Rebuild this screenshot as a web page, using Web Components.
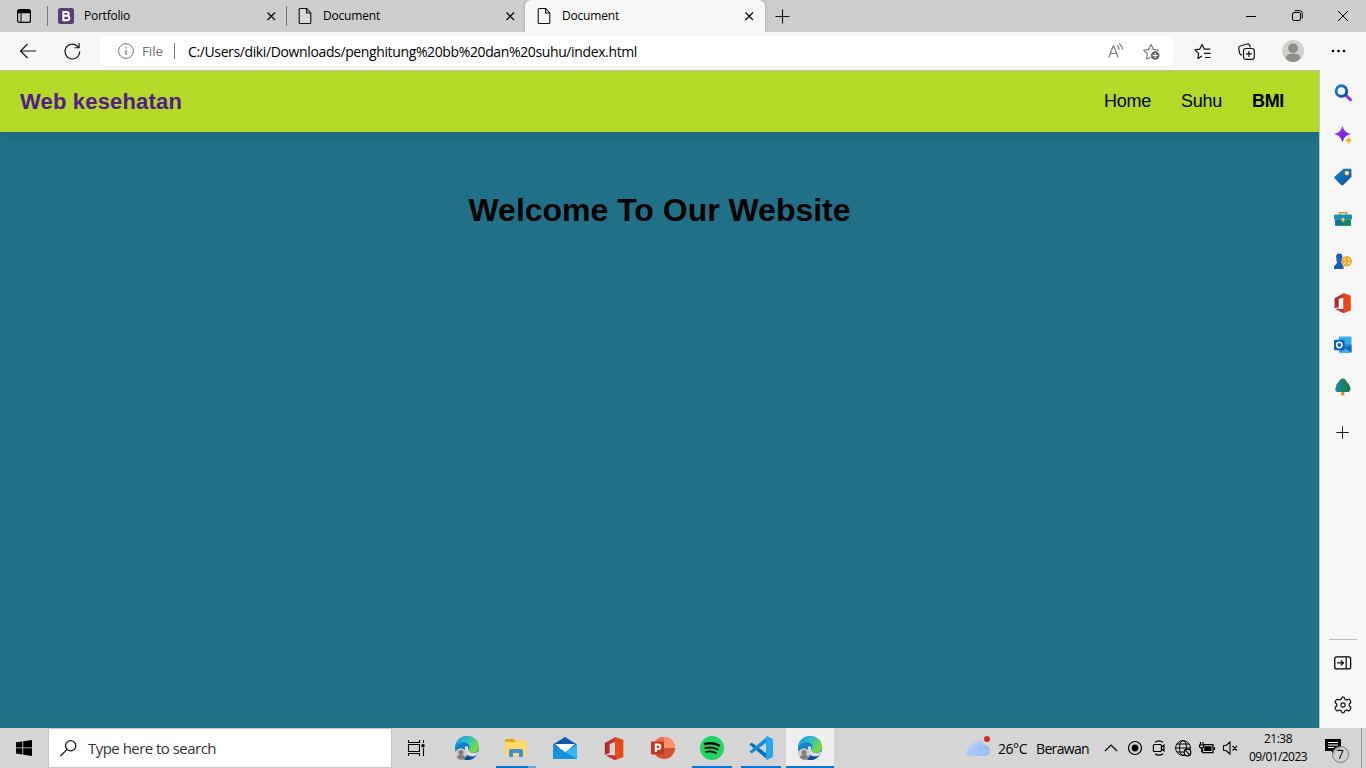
<!DOCTYPE html>
<html lang="id">
<head>
<meta charset="utf-8">
<title>Document</title>
<style>
html,body{margin:0;height:100%;overflow:hidden;background:#f7f7f7}
body{font-family:"Open Sans","Noto Sans",sans-serif;color:#000}
</style>
</head>
<body>
<desktop-screen></desktop-screen>
<script>
const ICONS = {
tabs:`<rect x="1.6" y="1.6" width="12.8" height="12.8" rx="2" fill="none" stroke="#000" stroke-width="1.2"/><path d="M1.500 5.200V3.400Q1.500 1.500 3.400 1.500h9.200q1.900 0 1.900 1.900v1.800z"/><path d="M5 5v9.500" stroke="#000" stroke-width="1"/>`,
boot:`<rect width="16" height="16" rx="2.5" fill="#563d7c"/><path fill="none" stroke="#fff" stroke-width="2" d="M5.400 3.900h3.100c3 0 3 3.900 0 3.900H5.400zM5.400 7.800h3.400c3.400 0 3.400 4.400 0 4.400H5.400z"/>`,
doc:`<path fill="#f5f5f5" fill-opacity=".3" stroke="#111" stroke-width="1.1" stroke-linejoin="round" d="M3.200.5h6.600l4 4.500v9.500q0 1-1 1H3.200q-1 0-1-1v-13q0-1 1-1zM9.600.6V5h4.200"/>`,
close:`<path fill="none" stroke="#111" stroke-width="1.4" d="M4.500 4.500l7.500 7.500M12 4.500l-7.500 7.500"/>`,
plus:`<path fill="none" stroke="#111" stroke-width="1.1" d="M8.500 1.500v14M1.500 8.500h14"/>`,
min:`<path stroke="#000" d="M3 8.500h10"/>`,
restore:`<path fill="none" stroke="#000" d="M3.500 6q0-1.500 1.500-1.500h5q1.500 0 1.500 1.500v5q0 1.500-1.500 1.500H5Q3.500 12.500 3.500 11zM5.500 2.700h5.200q2.600 0 2.600 2.600v5.200"/>`,
winx:`<path fill="none" stroke="#000" d="M3 3l10 10M13 3L3 13"/>`,
back:`<path fill="none" stroke="#111" stroke-width="1.1" d="M16 8H.5M7.500 1l-7 7 7 7"/>`,
reload:`<path fill="none" stroke="#111" stroke-width="1.15" d="M15.700 8.500a7.400 7.400 0 1 1-2.500-5.500l1.700 1.600M15.100 0v4.700h-4.700"/>`,
info:`<circle cx="8" cy="8" r="7.400" fill="none" stroke="#777"/><path stroke="#777" stroke-width="1.300" d="M8 7v5M8 4v1.500"/>`,
read:`<g fill="none" stroke="#777" stroke-width="1.150"><path d="M.700 14.500L5.200 3h.500l4.600 11.500M2.400 10.500h6.200M9 2.700q2 1.300 2.200 4.100M11 .700q3.200 2 3.500 5.800"/></g>`,
staradd:`<path fill="none" stroke="#777" stroke-width="1.150" stroke-linejoin="round" d="M8 14.200L3.700 16l.600-5.100L.700 7.200l4.900-.800L8 1.500l2.400 4.900 5 .800-1 1"/><circle cx="12.200" cy="12.500" r="4.300" fill="#666"/><path stroke="#fff" stroke-width="1.100" d="M12.200 10v5M9.700 12.500h5"/>`,
fav:`<path fill="none" stroke="#111" stroke-width="1.200" stroke-linejoin="round" d="M8 12.900L4 15.400l.600-5L1 6.900l4.800-.800L8 1.500l2.300 4.600h6M10 10.300h6.500M11 14.500h5.500"/>`,
coll:`<g fill="none" stroke="#111" stroke-width="1.200"><path d="M3.900 12.200Q2 11.800 1.600 10L.700 5.200Q.600 3.500 2.200 3l7-2q1.900-.300 2.500 1.500l.600 2"/><rect x="5.500" y="5.500" width="10.800" height="10.800" rx="2.200"/><path d="M10.900 7.900v6M7.900 10.900h6"/></g>`,
person:`<circle cx="11" cy="11" r="11" fill="#d2d0cd"/><circle cx="11" cy="8.300" r="4.900" fill="#918d8a"/><path fill="#918d8a" d="M3.500 18q.400-4.200 7.500-4.200t7.500 4.200q-3 4-7.500 4t-7.500-4z"/>`,
dots:`<circle cx="3" cy="8" r="1.300"/><circle cx="8.500" cy="8" r="1.300"/><circle cx="14" cy="8" r="1.300"/>`,
search:`<defs><linearGradient id="a" x2="1" y2="1"><stop stop-color="#1b86e0"/><stop offset="1" stop-color="#103f9f"/></linearGradient></defs><path d="M11.500 11l4 3.700" stroke="#8a3be2" stroke-width="3" stroke-linecap="round"/><circle cx="7" cy="6.700" r="5" fill="#f4faff" stroke="url(#a)" stroke-width="2.700"/>`,
spark:`<defs><linearGradient id="a" x2="1" y2="1"><stop stop-color="#b14df5"/><stop offset=".5" stop-color="#8525e6"/><stop offset="1" stop-color="#5b3ce8"/></linearGradient></defs><path fill="url(#a)" d="M8 0c1.900 5 2.700 5.700 7.800 7.500C10.700 9.300 9.900 10 8 15.500 6.100 10 5.300 9.300.200 7.500 5.300 5.700 6.100 5 8 0z"/><path fill="#f5b51d" d="M13.800 9.800c.700 2.400 1.200 2.900 3.400 3.800-2.200.900-2.700 1.300-3.400 3.600-.700-2.300-1.200-2.700-3.400-3.600 2.200-.900 2.700-1.400 3.400-3.800z"/>`,
tag:`<defs><linearGradient id="a" y2="1"><stop stop-color="#1388ce"/><stop offset="1" stop-color="#124aa4"/></linearGradient></defs><path fill="url(#a)" d="M9 .700h6q1.500 0 1.500 1.500v6.300L8.700 16q-1.200.800-2.200-.200L.700 10q-.900-1 0-2z"/><circle cx="12.200" cy="4.800" r="1.700" fill="#fff" stroke="#f4cd39" stroke-width="1.200"/>`,
box:`<defs><linearGradient id="a" x2="1"><stop stop-color="#146ead"/><stop offset="1" stop-color="#168a50"/></linearGradient></defs><path fill="none" stroke="#d99b22" stroke-width="1.500" d="M5.200 5V2.600h6.600V5"/><rect x="0" y="4.200" width="17" height="5" rx="1" fill="#1c91b6"/><path fill="url(#a)" d="M1 9h15v6H1z"/><path fill="#f3ca42" d="M7.200 7.500h2.600V11H7.200z"/>`,
games:`<g fill="#175cbd"><circle cx="5" cy="4.500" r="3"/><path d="M2 7h6v1.500H6.800q.200 3 2.200 5V16H0v-2.500q3-2 3.100-5H2z"/></g><circle cx="12" cy="8.700" r="5" fill="#efad2e"/><g fill="#fff3bd"><circle cx="10" cy="7" r=".9"/><circle cx="14" cy="7" r=".9"/><circle cx="10" cy="10.500" r=".9"/><circle cx="14" cy="10.500" r=".9"/></g>`,
office:`<defs><linearGradient id="a" x2="1"><stop stop-color="#a72232"/><stop offset="1" stop-color="#ef5922"/></linearGradient></defs><path fill="url(#a)" fill-rule="evenodd" d="M1.500 5l8.500-4.700 6.700 2.200v14L10 19l-7-3.400 1-.8 6 .7V4.200L5.500 5.800v7.400l-4 1.600z"/><path fill="#e74816" d="M10 .3l6.700 2.200v14L10.200 19z"/><path fill="#d02a45" d="M3 14.900l7.200.6V19l-2-.6z"/>`,
outlook:`<path fill="#36b0ec" d="M4.500.500h11q1 0 1 1v13q0 1.500-1.500 1.500H5z"/><path fill="#1685d8" d="M5 8h11.500v1L5 15z"/><path fill="#1368b8" d="M10 11l6.500 4.500V9z"/><rect y="3.500" width="10" height="10" rx="1" fill="#0a62bd"/><circle cx="5" cy="8.500" r="2.500" fill="none" stroke="#fff" stroke-width="1.400"/>`,
tree:`<defs><linearGradient id="a" x2="1"><stop stop-color="#218aa1"/><stop offset="1" stop-color="#14764a"/></linearGradient></defs><path fill="#e58a16" d="M6.800 12h3v4.500h-3z"/><path fill="url(#a)" d="M8.300.5q2.400 0 4.300 4 2.200 1 1.900 2.700 2.600 4-.700 6H3Q-.4 12 2.200 7.500 1.400 6 4 4.300 5.700.5 8.300.5z"/>`,
panel:`<rect x=".700" y="2.700" width="15" height="11.300" rx="1.800" fill="none" stroke="#000" stroke-width="1.200"/><path fill="none" stroke="#000" stroke-width="1.100" d="M11.500 3v11M3 8.400h6M6.500 6l2.400 2.400-2.400 2.400"/>`,
gear:`<path fill="none" stroke="#111" stroke-width="1.150" stroke-linejoin="round" d="M6.900 2.900Q7.100.9 8.500.9t1.600 2l1.500.900q1.900-.900 2.800-.600 1.600 1.600 1.500 3l-1.500 1.400v1.800l1.500 1.300q.300 1.400-1.300 3.200-1.200.300-3-.700l-1.500.900q-.300 1.900-1.600 1.900t-1.600-1.900l-1.500-.900q-1.800 1-3 .700Q.800 12.100 1.100 10.700l1.500-1.300V7.600L1.100 6.200q-.100-1.400 1.500-3 .900-.300 2.800.600z"/><circle cx="8.500" cy="8.500" r="2" fill="none" stroke="#111" stroke-width="1.100"/>`,
win:`<path d="M0 2.300l6.400-.9v6.100H0zM7.200 1.300L16 0v7.500H7.200zM0 8.300h6.400v6.200L0 13.600zM7.200 8.300H16V16l-8.800-1.300z"/>`,
wsearch:`<circle cx="10.700" cy="5.800" r="5.100" fill="none" stroke="#111" stroke-width="1.200"/><path d="M7 9.400L.5 16" stroke="#111" stroke-width="1.300"/>`,
task:`<path fill="none" stroke="#000" stroke-width="1.100" d="M.5 0v2.500h11V0M.5 16v-2.500h11V16M.5 4.500h11v7H.5zM15.500 0v3M15.500 8v8"/><path d="M13.500 4.200h3v3h-3z"/>`,
edge:`<defs><linearGradient id="a" x2="1" y2=".5"><stop stop-color="#1695d4"/><stop offset=".45" stop-color="#28bcd3"/><stop offset="1" stop-color="#79db3d"/></linearGradient><linearGradient id="b" x2=".7" y2="1"><stop stop-color="#189fe6"/><stop offset="1" stop-color="#0857ab"/></linearGradient></defs><circle cx="12" cy="12" r="12" fill="url(#b)"/><path fill="url(#a)" d="M.400 10C1.700 3.800 6.100 0 12.100 0 19 0 24 5 24 10.600c0 4.500-3 6.400-6.300 6.400-2.900 0-4.700-1.500-4.700-2.700 0-1 1.200-1.400 1.200-3.400 0-2.700-2.500-4.700-5.800-4.700C4.700 6.200 1.800 8 .4 10z"/><path fill="#0c4c91" d="M8.500 12q-1.300 8 6 9.300 4 .5 7.100-2.100Q18 24 12.300 24 6 22.500 6 17q0-3 2.500-5z"/><path fill="#dcdcdc" d="M10 13q-1-2 1.500-3 2 0 1.600 3.700 1 3.500 6.200 3.400 2.400-.300 4.500-2-1 3.200-2.700 4.500-4 2-9.100-.600Q9.500 17 10 13z"/><circle cx="6" cy="18" r="5.800" fill="#cfccca"/><circle cx="6" cy="16.600" r="2.500" fill="#827d7b"/><path fill="#827d7b" d="M1.900 21.500q.4-2.700 4.100-2.700t4.100 2.700Q8 23.800 6 23.800t-4.100-2.300z"/>`,
files:`<path fill="#e6a81a" d="M1 4q0-1 1-1h8l1.500 2V8H1z"/><path fill="#ffd966" d="M1 6h10.500L13 4.500h8.500q1 0 1 1V20H1z"/><path fill="#3d91d8" d="M5 21v-6.500Q5 13 6.500 13h11q1.500 0 1.500 1.500V21h-4v-4H9v4z"/>`,
mail:`<path fill="#0c59a4" d="M0 8.500L12 1l12 7.500-12 9z"/><path fill="#fff" d="M2 8h20l-10 9z"/><path fill="#32b4ee" d="M0 8.500L12 16l12-7.500V23H0z"/><path fill="#1691dd" d="M12 16l12 7H0V8.500z"/>`,
ppt:`<circle cx="13" cy="12" r="11" fill="#d35230"/><path fill="#ed6c47" d="M13 12V1A11 11 0 0 0 2 12z"/><path fill="#ff9068" d="M13 1a11 11 0 0 1 11 11H13z"/><rect y="5.500" width="13" height="13" rx="1" fill="#bd3a1e"/><path fill="none" stroke="#fff" stroke-width="2" d="M4.800 16V8.500h2.100c3.300 0 3.300 4.600 0 4.600H4.800"/>`,
spot:`<circle cx="12" cy="12" r="12" fill="#1ed760"/><g fill="none" stroke="#000" stroke-linecap="round"><path stroke-width="2.500" d="M5 8q7.500-2 14 1.500"/><path stroke-width="2" d="M5.500 12q6.500-1.500 12 1.400"/><path stroke-width="1.700" d="M6 15.800q5.500-1.200 10 1.200"/></g>`,
code:`<path fill="#0072bb" d="M.4 8.500L2 7q.7-.5 1.400 0L18 18v5.300z"/><path fill="#0d8ed5" d="M.4 15.700L2 17q.7.500 1.400 0L18 6V.700z"/><path fill="#2aa7ee" d="M18 0l5 2.500q1 .5 1 1.500v16q0 1-1 1.500L18 24q-1-.5-1-2V2q0-1.500 1-2z"/>`,
cloud:`<defs><linearGradient id="a" y2="1"><stop stop-color="#cee1fa"/><stop offset="1" stop-color="#78a7ee"/></linearGradient></defs><g transform="translate(0 -1)"><path fill="url(#a)" d="M5 21c-6 0-6.300-7.400-.200-8C6 3 16 3 18 9.700c7 .500 7.700 11.300 0 11.300z"/><path fill="#a9c8fa" opacity=".8" d="M1 18q1-4 5.500-4.200Q12 14 14 17q3-4 9-2-1 6-5 6H5q-3 0-4-3z"/></g><circle cx="21" cy="3" r="3" fill="#cf2824"/>`,
up:`<path fill="none" stroke="#000" stroke-width="1.200" d="M2 11l6-6 6 6"/>`,
rec:`<circle cx="8" cy="8" r="6.500" fill="none" stroke="#000" stroke-width="1.200"/><circle cx="8" cy="8" r="3.400"/>`,
cam:`<path fill="none" stroke="#000" stroke-width="1.200" d="M4 2.300q4-3 8 0M4 13.700q4 3 8 0M3.400 4.500h6q1 0 1 1v5q0 1-1 1h-6q-1 0-1-1v-5q0-1 1-1zM10.500 7l2.500-1.800v5.600L10.500 9"/>`,
globe:`<g fill="none" stroke="#000"><circle cx="8" cy="8" r="7.400"/><ellipse cx="8" cy="8" rx="3.500" ry="7.400"/><path d="M.7 8h14.500M2 4h12M2 12h8"/><circle cx="12.500" cy="12.500" r="3.300" fill="#d6d6d6" stroke-width="1.200"/><path stroke-width="1.200" d="M10.200 10.200l4.600 4.600"/></g>`,
battery:`<path fill="none" stroke="#000" stroke-width="1.200" d="M5 4.600h9v8H3.500V9M1.500 2v3M4 2v3M.5 5h4.300v1Q4.800 8 2.700 8T.5 6zM2.700 8v4M15.500 7v3"/><path d="M5.500 6.300h7v4.800H5z"/>`,
vol:`<path fill="none" stroke="#000" stroke-width="1.100" d="M1.500 5.500H4L8 2v12l-4-3.500H1.500zM10.500 6l4.500 4.500M15 6l-4.500 4.500"/>`,
note:`<path d="M0 0h16v12H10v4.500L6 12H0z"/><path stroke="#fff" stroke-width="1.200" d="M3 3.500h10M3 6h10M3 8.500h6"/>`
};
const VB={plus:17,back:17,reload:17,staradd:17,fav:17,coll:17,person:22,dots:17,search:17,spark:17,tag:17,box:17,games:17,outlook:17,tree:17,panel:17,gear:17,office:19,wsearch:17,task:17,note:17,edge:24,files:24,mail:24,ppt:24,spot:24,code:24,cloud:24};
customElements.define('ui-icon', class extends HTMLElement{
 constructor(){super();this.attachShadow({mode:'open'})}
 connectedCallback(){const n=this.getAttribute('name'),v=VB[n]||16,s=this.getAttribute('size')||v;
  this.shadowRoot.innerHTML=`<style>:host{display:flex;flex:none;align-items:center;justify-content:center}svg{display:block;overflow:visible;flex:none}</style><svg width="${s}" height="${s}" viewBox="0 0 ${v} ${v}">${ICONS[n]}</svg>`}
});
/* Single-line label whose tracking is tuned to a target width. */
customElements.define('ui-label', class extends HTMLElement{
 constructor(){super();this.attachShadow({mode:'open'}).innerHTML=`<style>:host{display:block;flex:none;white-space:pre}span{display:inline-block}</style><span><slot></slot></span>`}
 connectedCallback(){const w=+this.getAttribute('w');if(!w)return;
  const s=this.shadowRoot.querySelector('span'),n=this.textContent.length;
  s.style.letterSpacing=((w-s.getBoundingClientRect().width)/n)+'px';this.style.width=w+'px'}
});
const make=(tag,html)=>customElements.define(tag,class extends HTMLElement{
 constructor(){super();this.attachShadow({mode:'open'});const t=document.createElement('template');t.innerHTML=html;this.shadowRoot.append(t.content.cloneNode(true))}
});
make('browser-tab',`<style>:host{display:flex;box-sizing:border-box;align-items:center;width:239px;height:32px;padding:0 7px 0 10px;border-right:1px solid transparent;font-size:12px;position:relative;flex:none}
:host([active]){width:240px;margin-left:-1px;background:#f7f7f7;border-radius:6px 6px 0 0;border:0;padding:0 8px 0 11px;box-shadow:0 0 3px #0004}
.t{flex:1;margin-left:10px;padding-bottom:1px}:host([rule])::after{content:"";position:absolute;right:-1px;top:6px;width:1px;height:20px;background:#777}</style>
<slot name="icon"></slot><div class="t"><slot></slot></div><ui-icon name="close"></ui-icon>`);
make('tab-strip',`<style>:host{display:flex;height:32px;background:#cdcdcd;align-items:center;overflow:hidden}
.w{width:47px;height:20px;border-right:1px solid #777;flex:none}.p{width:34px}.sp{flex:1}.c{width:46px}</style>
<ui-icon class="w" name="tabs"></ui-icon>
<browser-tab rule><ui-icon slot="icon" name="boot"></ui-icon><ui-label w="46">Portfolio</ui-label></browser-tab>
<browser-tab><ui-icon slot="icon" name="doc"></ui-icon><ui-label w="57">Document</ui-label></browser-tab>
<browser-tab active><ui-icon slot="icon" name="doc"></ui-icon><ui-label w="57">Document</ui-label></browser-tab>
<ui-icon class="p" name="plus" size="17"></ui-icon><div class="sp"></div>
<ui-icon class="c" name="min"></ui-icon><ui-icon class="c" name="restore"></ui-icon><ui-icon class="c" name="winx"></ui-icon>`);
make('address-bar',`<style>:host{display:flex;box-sizing:border-box;width:1074px;height:30px;margin:0 6px;background:#fff;border-radius:4px;align-items:center;padding:0 14px 0 18px;font-size:14px;box-shadow:0 0 2px #0001;flex:none}
.f{margin-left:8px;color:#717171;font-size:13.500px}.r{width:1px;height:16px;background:#777;margin:0 13px 0 11px}.s{flex:1}.g{width:54px}</style>
<ui-icon name="info"></ui-icon><ui-label class="f" w="21">File</ui-label><div class="r"></div><ui-label w="449">C:/Users/diki/Downloads/penghitung%20bb%20dan%20suhu/index.html</ui-label><div class="s"></div><ui-icon class="g" name="read"></ui-icon><ui-icon name="staradd"></ui-icon>`);
make('tool-bar',`<style>:host{display:flex;height:38px;background:#f7f7f7;align-items:center;padding-left:6px}
.b{width:44px}.m{width:46px}.q{width:48px;padding-left:1px;box-sizing:border-box}</style><ui-icon class="b" name="back"></ui-icon><ui-icon class="b" name="reload"></ui-icon><address-bar></address-bar>
<ui-icon class="b" name="fav"></ui-icon><ui-icon class="b" name="coll"></ui-icon><ui-icon class="q" name="person"></ui-icon><ui-icon class="m" name="dots" style="width:44px"></ui-icon>`);
make('site-header',`<style>:host{display:flex;height:61px;background:#b2da27;align-items:center;justify-content:space-between;padding:0 35px 0 20px;box-shadow:0 2px 12px #0002;font-size:18px}
.b{font-size:22px;font-weight:bold;color:#551a8b}nav{display:flex;gap:30px}.n{font-weight:bold}</style>
<ui-label class="b" w="162">Web kesehatan</ui-label><nav><ui-label w="47">Home</ui-label><ui-label w="41">Suhu</ui-label><ui-label class="n" w="32">BMI</ui-label></nav>`);
make('web-page',`<style>:host{display:block;flex:1;background:#207188;font-family:"Liberation Sans",Arial,sans-serif;overflow:hidden}
h1{margin:59px 0 0;display:flex;justify-content:center;font-size:32px;line-height:38px;font-weight:bold}</style>
<site-header></site-header><h1><ui-label w="382">Welcome To Our Website</ui-label></h1>`);
make('side-bar',`<style>:host{display:flex;flex-direction:column;box-sizing:border-box;align-items:flex-start;padding:2px 0 2px;background:#f7f7f7;border-left:1px solid #c4c4c4;flex:none;width:47px}
ui-icon{height:42px;width:46px}.p{margin-top:4px;width:45px;height:41px;margin-bottom:1px}.s{flex:1}.r{height:1px;width:28px;background:#bbb;margin:0 0 2px 9px}</style>
${['search','spark','tag','box','games','office','outlook','tree'].map(n=>`<ui-icon name="${n}" size="${n=='office'?20:18}"></ui-icon>`).join('')}<ui-icon class="p" name="plus" size="15"></ui-icon><div class="s"></div><div class="r"></div><ui-icon name="panel" size="18"></ui-icon><ui-icon name="gear" size="18"></ui-icon>`);
make('task-app',`<style>:host{display:flex;flex-direction:column;width:48px;height:40px;align-items:center;flex:none}
.i{display:flex;align-items:center;justify-content:center;height:38px;padding-top:2px;box-sizing:border-box}:host([on]) .u{width:40px;background:#0078d7}.u{height:2px;width:0}
:host([multi]) .u{background:linear-gradient(90deg,#0078d7 32px,#66a9e2 32px)}:host([active]){background:#eee}:host([active]) .u{width:48px;background:#0078d7}</style><div class="i"><slot></slot></div><div class="u"></div>`);
make('search-box',`<style>:host{display:flex;box-sizing:border-box;width:344px;height:40px;border:1px solid #c5c5c5;background:#fff;align-items:center;padding-left:11px;font-size:15px;color:#333;flex:none}ui-label{margin-left:11px}</style><ui-icon name="wsearch"></ui-icon><ui-label w="128">Type here to search</ui-label>`);
make('tray-clock',`<style>:host{display:flex;flex-direction:column;align-items:center;width:72px;font-size:12px;line-height:18px;flex:none;padding-bottom:1px}</style><ui-label w="28">21:38</ui-label><ui-label w="58">09/01/2023</ui-label>`);
make('notice-button',`<style>:host{display:block;position:relative;width:26px;height:26px;flex:none}
.i{position:absolute;left:1px;top:4px}.n{position:absolute;left:8px;top:11px;width:15px;height:15px;border:1px solid #777;border-radius:50%;background:#d2d2d2d0;font-size:12px;line-height:15px;text-align:center}</style><ui-icon class="i" name="note" size="17"></ui-icon><div class="n">7</div>`);
make('task-bar',`<style>:host{display:flex;height:40px;background:#d5d5d5;align-items:center;font-size:14px;flex:none}
.st{width:48px}.tv{width:48px;margin-right:3px}.apps{display:flex;gap:1px}.s{flex:1}.w{margin-right:8px}.g{margin-right:9px}.t{width:24px}.first{margin-left:10px}.c{margin-left:2px}.v{width:21px}.l{width:1px;height:40px;background:#999;margin:0 4px 0 11px}.nb{margin-left:10px}</style>
<ui-icon class="st" name="win"></ui-icon><search-box></search-box><ui-icon class="tv" name="task"></ui-icon>
<div class="apps"><task-app><ui-icon name="edge"></ui-icon></task-app><task-app on multi><ui-icon name="files"></ui-icon></task-app><task-app><ui-icon name="mail"></ui-icon></task-app><task-app><ui-icon name="office" size="23"></ui-icon></task-app><task-app><ui-icon name="ppt"></ui-icon></task-app><task-app on><ui-icon name="spot"></ui-icon></task-app><task-app on><ui-icon name="code"></ui-icon></task-app><task-app active><ui-icon name="edge"></ui-icon></task-app></div>
<div class="s"></div><ui-icon class="w" name="cloud"></ui-icon><ui-label class="g" w="29">26°C</ui-label><ui-label w="53">Berawan</ui-label>
<ui-icon class="t first" name="up"></ui-icon><ui-icon class="t" name="rec"></ui-icon><ui-icon class="t" name="cam"></ui-icon><ui-icon class="t" name="globe"></ui-icon><ui-icon class="t" name="battery"></ui-icon><ui-icon class="v" name="vol"></ui-icon>
<tray-clock class="c"></tray-clock><notice-button class="nb"></notice-button><div class="l"></div>`);
make('desktop-screen',`<style>:host{display:flex;flex-direction:column;width:1366px;height:768px;overflow:hidden}
.m{display:flex;flex:1;background:#f7f7f7}.v{display:flex;flex:1;border-top:1px solid #bdbdbd}</style>
<tab-strip></tab-strip><tool-bar></tool-bar><div class="m"><div class="v"><web-page></web-page></div><side-bar></side-bar></div><task-bar></task-bar>`);
</script>
</body>
</html>
